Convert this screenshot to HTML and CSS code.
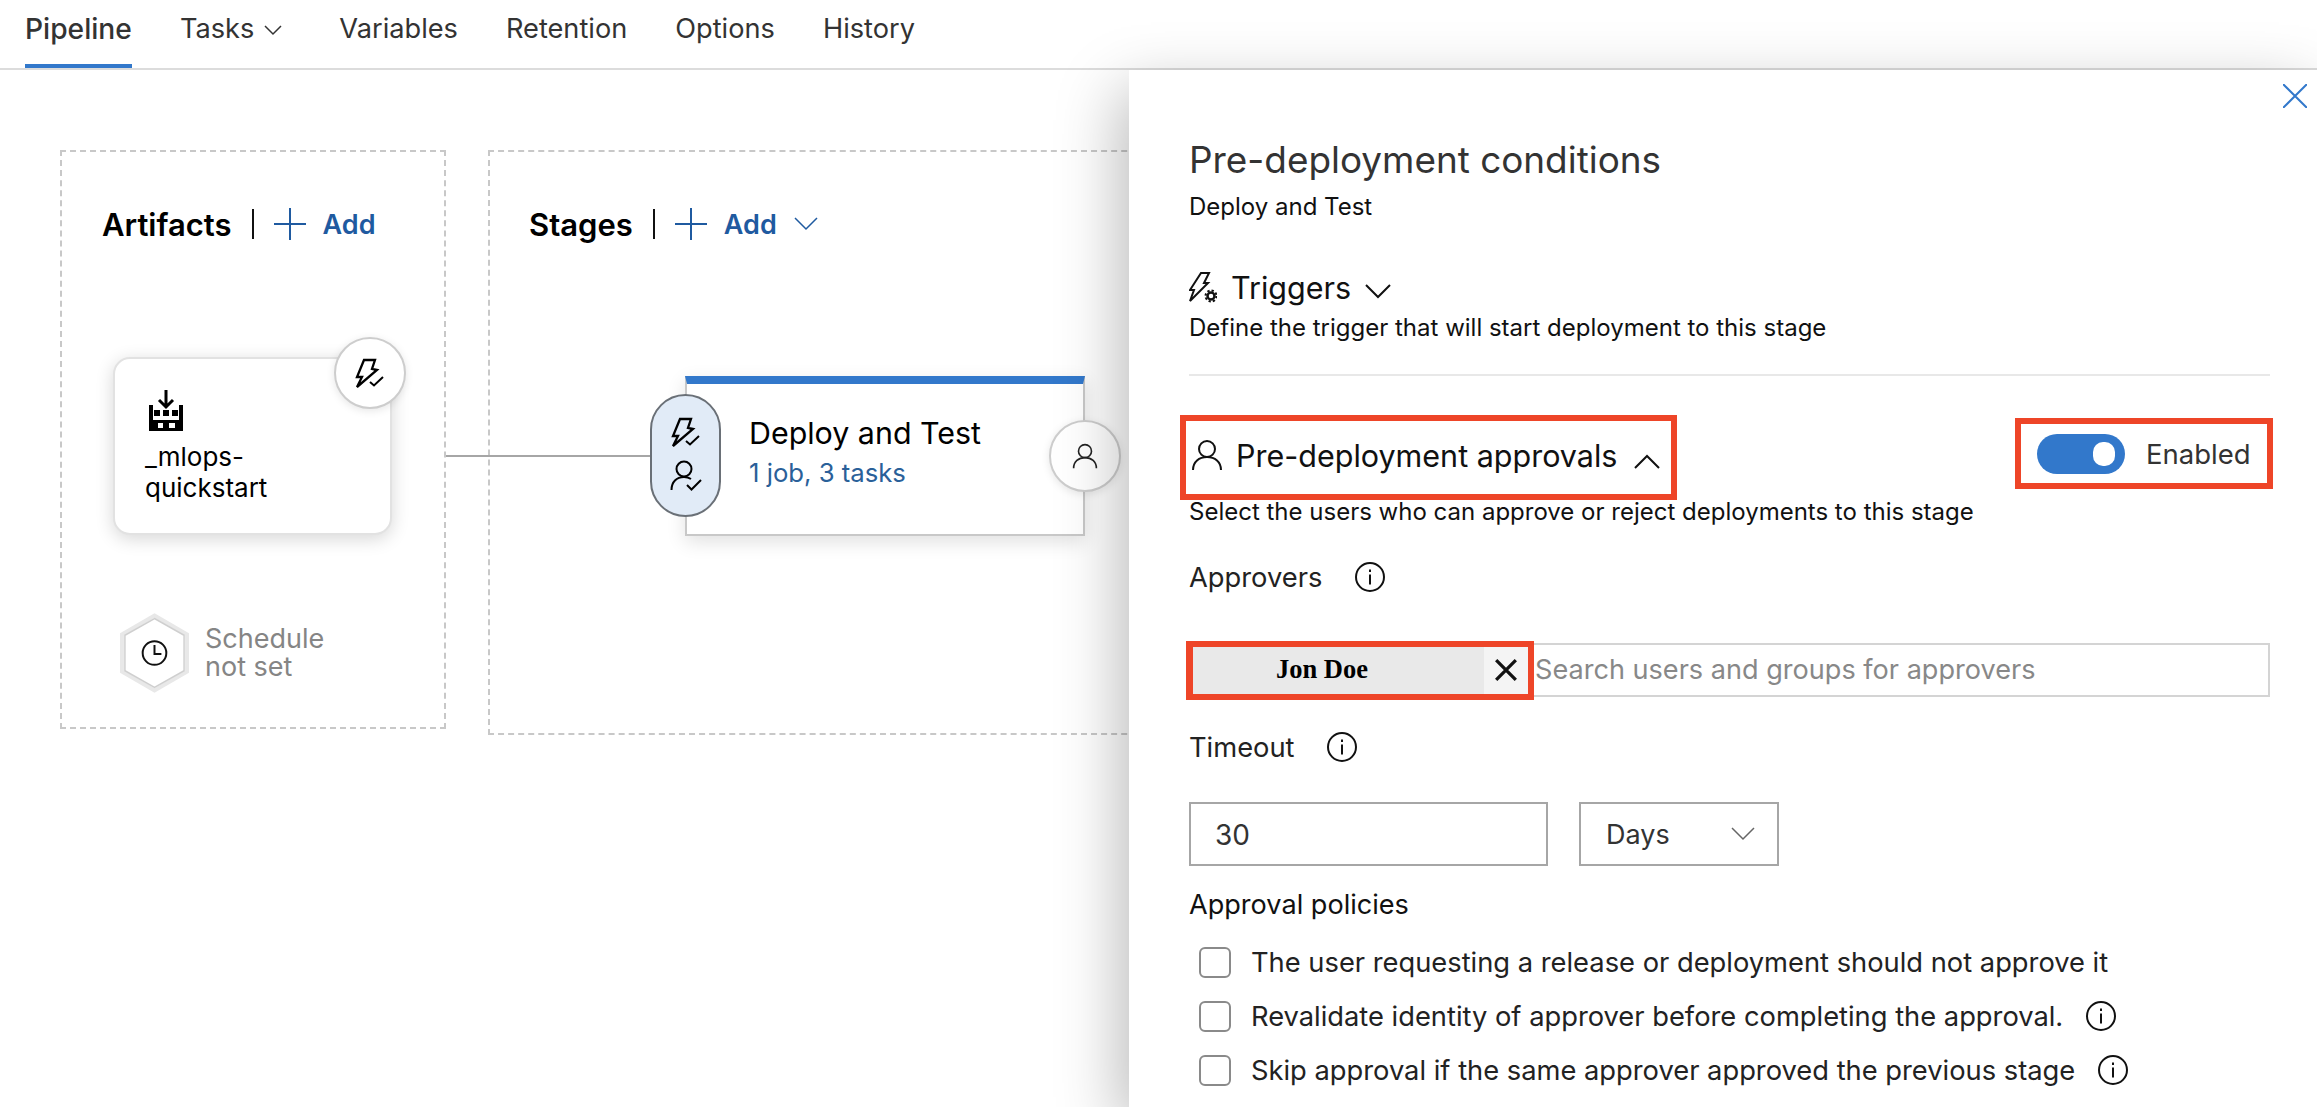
FILE: index.html
```html
<!DOCTYPE html>
<html lang="en">
<head>
    <meta charset="UTF-8">
    <meta name="viewport" content="width=device-width, initial-scale=1.0">
    <title>Pre-deployment conditions</title>
    <link rel="stylesheet" href="styles.css">
</head>
<body>
    <svg class="defs" width="0" height="0">
        <symbol id="bolt-check" viewBox="0 0 32 32">
            <path d="M10 3h11l-3 9 5 1L3 30l5-10H3z" fill="none" stroke="currentColor" stroke-width="2.300"/>
            <path d="M16 25l4 3.500 9-8.500" fill="none" stroke="currentColor" stroke-width="2"/>
        </symbol>
        <symbol id="person" viewBox="0 0 32 32">
            <circle cx="16" cy="10" r="8" fill="none" stroke="currentColor" stroke-width="2"/>
            <path d="M2 31c0-8 6-13 14-13s14 5 14 13" fill="none" stroke="currentColor" stroke-width="2"/>
        </symbol>
        <symbol id="person-check" viewBox="0 0 32 32">
            <circle cx="14" cy="9" r="7.5" fill="none" stroke="currentColor" stroke-width="2"/>
            <path d="M1.500 30c0-8 5-13 12.500-13 3 0 5 .7 7 2" fill="none" stroke="currentColor" stroke-width="2"/>
            <path d="M17 25l4.500 4.500L31 20" fill="none" stroke="currentColor" stroke-width="2"/>
        </symbol>
        <symbol id="info" viewBox="0 0 30 30">
            <circle cx="15" cy="15" r="14" fill="none" stroke="currentColor" stroke-width="2"/>
            <path d="M15 12.500v10M15 7.500v2.500" fill="none" stroke="currentColor" stroke-width="2"/>
        </symbol>
    </svg>

    <nav class="tabs">
        <a class="tab active">Pipeline</a>
        <a class="tab tab-tasks">Tasks
            <svg class="chev-small" viewBox="0 0 18 11"><path d="M1 1l8 8 8-8" fill="none" stroke="currentColor" stroke-width="1.500"/></svg>
        </a>
        <a class="tab">Variables</a>
        <a class="tab">Retention</a>
        <a class="tab">Options</a>
        <a class="tab">History</a>
    </nav>

    <main class="canvas">
        <div class="connector"></div>

        <section class="lane lane-artifacts">
            <div class="lane-head">
                <span class="lane-title">Artifacts</span>
                <span class="lane-sep"></span>
                <svg class="plus" viewBox="0 0 32 32"><path d="M16 0v32M0 16h32" stroke="currentColor" stroke-width="2"/></svg>
                <span class="lane-add">Add</span>
            </div>
            <div class="artifact">
                <svg class="factory" viewBox="0 0 36 41">
                    <path d="M18 0v16M11 10l7 7 7-7" fill="none" stroke="#000" stroke-width="3"/>
                    <path d="M1 15h4v15h26V15h4v26H1z" fill="#000"/>
                    <path d="M6 20h6v6H6zM15 20h6v6h-6zM24 20h6v6h-6z" fill="#000"/>
                    <path d="M10 33h5v5h-5zM21 33h6v5h-6z" fill="#fff"/>
                </svg>
                <div class="artifact-name">_mlops-<br>quickstart</div>
                <div class="round-badge badge-trigger">
                    <svg class="icon-32"><use href="#bolt-check"/></svg>
                </div>
            </div>
            <div class="schedule">
                <svg class="hex" viewBox="0 0 70 80">
                    <polygon points="35,2 68,21 68,59 35,78 2,59 2,21" fill="none" stroke="#e8e8e8" stroke-width="4"/>
                    <polygon points="35,5 65,22 65,58 35,75 5,58 5,22" fill="#fff" stroke="#cfcfcf" stroke-width="1.500"/>
                    <circle cx="35" cy="40" r="12" fill="none" stroke="#111" stroke-width="2"/>
                    <path d="M35 32v9h7" fill="none" stroke="#111" stroke-width="2"/>
                </svg>
                <div class="schedule-text">Schedule<br>not set</div>
            </div>
        </section>

        <section class="lane lane-stages">
            <div class="lane-head">
                <span class="lane-title">Stages</span>
                <span class="lane-sep"></span>
                <svg class="plus" viewBox="0 0 32 32"><path d="M16 0v32M0 16h32" stroke="currentColor" stroke-width="2"/></svg>
                <span class="lane-add">Add</span>
                <svg class="chev-add" viewBox="0 0 24 14"><path d="M1 1l11 11L23 1" fill="none" stroke="currentColor" stroke-width="1.500"/></svg>
            </div>
            <div class="stage">
                <div class="stage-name">Deploy and Test</div>
                <div class="stage-sub">1 job, 3 tasks</div>
                <div class="stage-pill">
                    <svg class="icon-32"><use href="#bolt-check"/></svg>
                    <svg class="icon-32"><use href="#person-check"/></svg>
                </div>
                <div class="round-badge badge-post">
                    <svg class="icon-26"><use href="#person"/></svg>
                </div>
            </div>
        </section>
    </main>

    <aside class="panel">
        <svg class="close" viewBox="0 0 24 24"><path d="M0 0l24 24M24 0L0 24" stroke="currentColor" stroke-width="2"/></svg>
        <h1 class="panel-title">Pre-deployment conditions</h1>
        <p class="panel-sub">Deploy and Test</p>

        <div class="section-head triggers-head">
            <svg class="trigger-icon" viewBox="0 0 28 32">
                <path d="M12 2h8l-5 10h4L1 30l4-11H1z" fill="none" stroke="#111" stroke-width="2"/>
                <circle cx="22" cy="25" r="3.500" fill="none" stroke="#111" stroke-width="2.500"/>
                <circle cx="22" cy="25" r="5.500" fill="none" stroke="#111" stroke-width="2" stroke-dasharray="2.300 2"/>
            </svg>
            <span>Triggers</span>
            <svg class="chev-big" viewBox="0 0 26 16"><path d="M1 2l12 12L25 2" fill="none" stroke="#111" stroke-width="2"/></svg>
        </div>
        <p class="panel-sub desc-trigger">Define the trigger that will start deployment to this stage</p>
        <div class="divider"></div>

        <div class="approvals-row">
            <div class="section-head approvals-head marked">
                <svg class="icon-32"><use href="#person"/></svg>
                <span>Pre-deployment approvals</span>
                <svg class="chev-big chev-open" viewBox="0 0 26 16"><path d="M1 14L13 2l12 12" fill="none" stroke="#111" stroke-width="2"/></svg>
            </div>
            <div class="toggle-box marked">
                <div class="toggle"><div class="knob"></div></div>
                <span>Enabled</span>
            </div>
        </div>
        <p class="panel-sub desc-approvals">Select the users who can approve or reject deployments to this stage</p>

        <div class="field-label approvers-label">
            <span>Approvers</span>
            <svg class="icon-info gap-approvers"><use href="#info"/></svg>
        </div>
        <div class="picker">
            <div class="chip marked">
                <span class="chip-name">Jon Doe</span>
                <span class="chip-x">
                    <svg viewBox="0 0 22 22"><path d="M2 2l18 18M20 2L2 20" stroke="#111" stroke-width="3"/></svg>
                </span>
            </div>
            <span class="picker-hint">Search users and groups for approvers</span>
        </div>

        <div class="field-label timeout-label">
            <span>Timeout</span>
            <svg class="icon-info gap-timeout"><use href="#info"/></svg>
        </div>
        <div class="timeout-row">
            <div class="box box-number">30</div>
            <div class="box box-unit">
                <span>Days</span>
                <svg class="chev-unit" viewBox="0 0 24 14"><path d="M1 1l11 11L23 1" fill="none" stroke="#666" stroke-width="1.500"/></svg>
            </div>
        </div>

        <div class="policies-title">Approval policies</div>
        <div class="policies">
            <div class="policy"><span class="check"></span><span>The user requesting a release or deployment should not approve it</span></div>
            <div class="policy"><span class="check"></span><span>Revalidate identity of approver before completing the approval.</span><svg class="icon-info gap-policy"><use href="#info"/></svg></div>
            <div class="policy"><span class="check"></span><span>Skip approval if the same approver approved the previous stage</span><svg class="icon-info gap-policy"><use href="#info"/></svg></div>
        </div>
    </aside>
</body>
</html>
```

FILE: styles.css
```css
* {
    box-sizing: border-box;
}
html, body {
    height: 100%;
}
body {
    margin: 0;
    position: relative;
    overflow: hidden;
    background: #fff;
    color: #000;
    font-family: Inter, "Liberation Sans", sans-serif;
}
.defs {
    position: absolute;
}
p, h1 {
    margin: 0;
}

/* tab bar */
.tabs {
    display: flex;
    gap: 48px;
    height: 70px;
    padding-left: 25px;
    border-bottom: 2px solid #dcdcdc;
}
.tab {
    display: flex;
    align-items: center;
    gap: 10px;
    height: 68px;
    padding-bottom: 11px;
    font-size: 27.2px;
    color: #333;
}
.tab.active {
    font-size: 28.2px;
    font-weight: 500;
    border-bottom: 4px solid #3278cb;
    padding-bottom: 7px;
}
.tab-tasks {
    margin-right: 9px;
}
.chev-small {
    width: 18px;
    height: 11px;
    margin-top: 4px;
}

/* pipeline canvas */
.canvas {
    position: relative;
    display: flex;
    gap: 42px;
    padding: 80px 0 0 60px;
}
.connector {
    position: absolute;
    left: 446px;
    top: 385px;
    width: 210px;
    height: 2px;
    background: #a6a6a6;
}
.lane {
    border: 2px dashed #c8c8c8;
    padding-top: 52px;
}
.lane-artifacts {
    width: 386px;
    height: 579px;
    padding-left: 40px;
}
.lane-stages {
    width: 800px;
    height: 585px;
    padding-left: 39px;
}
.lane-head {
    display: flex;
    align-items: center;
    height: 40px;
}
.lane-title {
    font-size: 31px;
    font-weight: 600;
}
.lane-sep {
    width: 2px;
    height: 30px;
    margin: 0 20px;
    background: #111;
}
.plus {
    width: 32px;
    height: 32px;
    color: #1f5aa0;
}
.lane-add {
    margin-left: 17px;
    font-size: 27px;
    font-weight: 600;
    color: #1f5aa0;
}
.chev-add {
    width: 24px;
    height: 14px;
    margin-left: 17px;
    color: #1f5aa0;
}

/* artifact card */
.artifact {
    position: relative;
    width: 279px;
    height: 178px;
    margin: 113px 0 0 11px;
    padding: 31px 0 0 30px;
    border: 2px solid #e2e2e2;
    border-radius: 17px;
    background: #fff;
    box-shadow: 0 4px 18px rgba(0, 0, 0, .16);
}
.factory {
    display: block;
    width: 36px;
    height: 41px;
    margin-left: 3px;
}
.artifact-name {
    margin-top: 10px;
    font-size: 26px;
    line-height: 31px;
}
.round-badge {
    position: absolute;
    display: flex;
    align-items: center;
    justify-content: center;
    width: 72px;
    height: 72px;
    border: 2px solid #cdcdcd;
    border-radius: 50%;
    background: #fff;
    box-shadow: 0 2px 8px rgba(0, 0, 0, .1);
}
.badge-trigger {
    top: -22px;
    right: -16px;
}
.badge-post {
    top: 36px;
    right: -38px;
}
.icon-32 {
    width: 32px;
    height: 32px;
}
.icon-26 {
    width: 26px;
    height: 28px;
    color: #222;
}

/* schedule */
.schedule {
    display: flex;
    align-items: center;
    gap: 16px;
    margin: 78px 0 0 18px;
}
.hex {
    width: 69px;
    height: 80px;
}
.schedule-text {
    font-size: 27px;
    line-height: 28px;
    color: #858585;
}

/* stage card */
.stage {
    position: relative;
    width: 400px;
    height: 160px;
    margin: 132px 0 0 156px;
    padding: 31px 0 0 62px;
    border: 2px solid #c8c8c8;
    border-top: 8px solid #3278cb;
    background: #fff;
    box-shadow: 0 6px 18px rgba(0, 0, 0, .12);
}
.stage-name {
    font-size: 30.4px;
    line-height: 36px;
}
.stage-sub {
    margin-top: 6px;
    font-size: 25.7px;
    line-height: 32px;
    color: #2a6099;
}
.stage-pill {
    position: absolute;
    top: 10px;
    left: -37px;
    display: flex;
    flex-direction: column;
    align-items: center;
    gap: 12px;
    width: 71px;
    height: 123px;
    padding-top: 20px;
    border: 2px solid #6a7077;
    border-radius: 36px;
    background: #e1ebf7;
}

/* side panel */
.panel {
    position: absolute;
    top: 70px;
    left: 1129px;
    right: 0;
    bottom: 0;
    padding: 68px 47px 0 60px;
    overflow: hidden;
    background: #fff;
    box-shadow: -8px 20px 60px rgba(0, 0, 0, .28);
}
.close {
    position: absolute;
    top: 14px;
    right: 10px;
    width: 24px;
    height: 24px;
    color: #3278cb;
}
.panel-title {
    font-size: 36.9px;
    font-weight: 400;
    line-height: 44px;
    color: #333;
}
.panel-sub {
    margin-top: 10px;
    font-size: 24px;
    line-height: 30px;
    color: #111;
}
.section-head {
    display: flex;
    align-items: center;
    font-size: 30.5px;
    color: #111;
}
.triggers-head {
    height: 40px;
    margin-top: 45px;
    gap: 14px;
}
.trigger-icon {
    width: 28px;
    height: 32px;
}
.chev-big {
    width: 26px;
    height: 16px;
    margin-top: 8px;
}
.chev-open {
    margin: 14px 0 0 4px;
}
.desc-trigger {
    margin-top: 6px;
}
.divider {
    height: 2px;
    margin-top: 31px;
    background: #e8e8e8;
}
.marked {
    border: 6px solid #ee4528;
}
.approvals-row {
    display: flex;
    justify-content: space-between;
    align-items: flex-start;
    margin: 39px -3px 0 -9px;
}
.approvals-head {
    width: 497px;
    height: 85px;
    padding: 0 0 5px 5px;
    gap: 13px;
}
.toggle-box {
    display: flex;
    align-items: center;
    gap: 21px;
    width: 258px;
    height: 71px;
    margin-top: 3px;
    padding-left: 16px;
    font-size: 27.5px;
    color: #333;
}
.toggle {
    display: flex;
    align-items: center;
    justify-content: flex-end;
    width: 88px;
    height: 40px;
    padding-right: 10px;
    border-radius: 20px;
    background: #3278cb;
}
.knob {
    width: 22px;
    height: 24px;
    border-radius: 10px;
    background: #fff;
}
.desc-approvals {
    margin-top: -3px;
}
.field-label {
    display: flex;
    align-items: center;
    height: 40px;
    margin-top: 30px;
    font-size: 27.3px;
    color: #222;
}
.icon-info {
    width: 30px;
    height: 30px;
    color: #111;
}
.gap-approvers {
    margin-left: 33px;
}
.gap-timeout {
    margin-left: 32px;
}
.gap-policy {
    margin-left: 23px;
}

/* approver picker */
.picker {
    display: flex;
    align-items: center;
    gap: 1px;
    height: 54px;
    margin-top: 46px;
    border: 2px solid #d4d4d4;
}
.chip {
    display: flex;
    flex: none;
    width: 348px;
    height: 59px;
    margin-left: -5px;
    border-width: 6px 6px 6px 7px;
    background: #f4f4f4;
}
.chip-name {
    width: 291px;
    padding-left: 83px;
    font-family: "Liberation Serif", serif;
    font-size: 26.5px;
    font-weight: 700;
    line-height: 45px;
    background: #e9e9e9;
}
.chip-x {
    display: flex;
    flex: 1;
    align-items: center;
    justify-content: center;
}
.chip-x svg {
    width: 24px;
    height: 24px;
}
.picker-hint {
    padding-bottom: 2px;
    font-size: 27.1px;
    color: #888;
    white-space: nowrap;
}

/* timeout */
.timeout-row {
    display: flex;
    gap: 31px;
    margin-top: 35px;
}
.box {
    display: flex;
    align-items: center;
    height: 64px;
    border: 2px solid #a6a6a6;
    font-size: 27px;
    color: #333;
}
.box-number {
    width: 359px;
    padding: 2px 0 0 24px;
    font-size: 28px;
}
.box-unit {
    justify-content: space-between;
    width: 200px;
    padding: 0 22px 0 25px;
}
.chev-unit {
    width: 24px;
    height: 14px;
}

/* policies */
.policies-title {
    margin-top: 24px;
    font-size: 27.1px;
    line-height: 30px;
    color: #111;
}
.policies {
    margin-top: 15px;
}
.policy {
    display: flex;
    align-items: center;
    height: 54px;
    padding-left: 10px;
    font-size: 27.3px;
    color: #222;
    white-space: nowrap;
}
.check {
    flex: none;
    width: 32px;
    height: 31px;
    margin-right: 20px;
    border: 2px solid #8a8a8a;
    border-radius: 6px;
}
```
